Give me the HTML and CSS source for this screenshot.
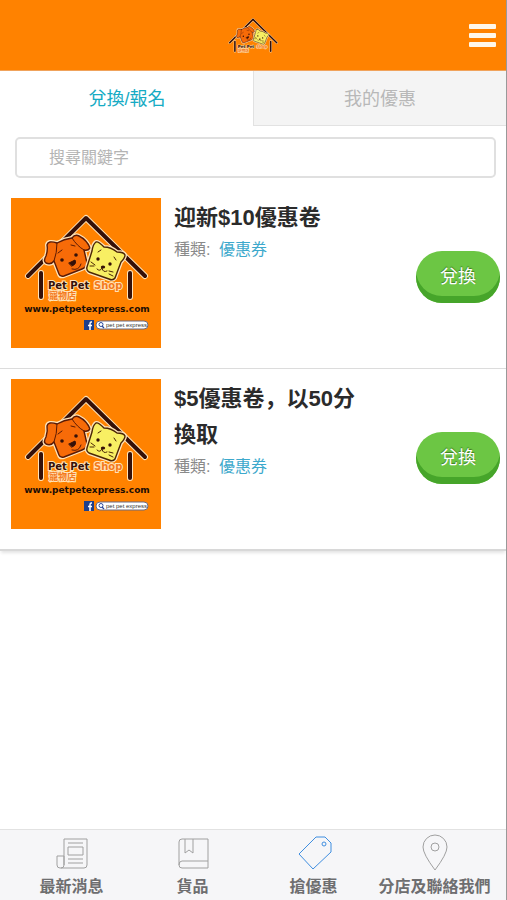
FILE: index.html
```
<!DOCTYPE html>
<html lang="zh-Hant">

<head>
  <meta charset="UTF-8" />
  <meta name="viewport" content="width=device-width, initial-scale=1.0" />
  <title>Pet Pet Shop</title>
  <link rel="stylesheet" href="styles.css">
</head>

<body>

  <!-- house, dog and cat shared by all logos -->
  <svg class="sprite" aria-hidden="true">
    <symbol id="pets" viewBox="0 0 150 150">
      <g fill="none" stroke-linecap="round" stroke-linejoin="round">
        <path d="M17 78 L75 20 L134 78 M30 75 V99 M119 75 V99" stroke="#ffe3b8" stroke-width="6" />
        <path d="M17 78 L75 20 L134 78 M30 75 V99 M119 75 V99" stroke="#351008" stroke-width="4" />
      </g>
      <g stroke-linejoin="round" stroke-linecap="round">
        <path d="M46 45 Q53 41 61 40 Q64 36 68 38 Q76 42 79 50 Q77 53 73 52 L76 65 Q76 69 71 71 L53 78 Q49 79 48 76 L43 63 Q40 67 35 65 Q32 63 35 58 Q37 52 36 47 Q37 42 46 45 Z" fill="#f76b08" stroke="#ffe3b8" stroke-width="4" />
        <path d="M46 45 Q53 41 61 40 Q64 36 68 38 Q76 42 79 50 Q77 53 73 52 L76 65 Q76 69 71 71 L53 78 Q49 79 48 76 L43 63 Q40 67 35 65 Q32 63 35 58 Q37 52 36 47 Q37 42 46 45 Z" fill="#f76b08" stroke="#5a1a05" stroke-width="1.4" />
        <path d="M46 45 Q46 55 43 63 M61 40 Q66 48 73 52 M47 55 l4 -3 M60 47 l4 1 M61 71 Q68 73 70 66" fill="none" stroke="#5a1a05" stroke-width="1" />
        <path d="M58 65 L64 62 Q66 66 61 68 Z" fill="#351008" stroke="#351008" stroke-width="1" />
        <circle cx="51" cy="62" r="1.8" fill="#351008" />
        <circle cx="65" cy="57" r="1.8" fill="#351008" />
        <path d="M85 44 Q87 43 93 49 Q100 49 106 54 Q113 54 114 57 Q114 60 110 64 L104 80 Q102 83 98 81 L78 74 Q75 72 76 69 L81 53 Q82 46 85 44 Z" fill="#f8ef63" stroke="#ffe3b8" stroke-width="4" />
        <path d="M85 44 Q87 43 93 49 Q100 49 106 54 Q113 54 114 57 Q114 60 110 64 L104 80 Q102 83 98 81 L78 74 Q75 72 76 69 L81 53 Q82 46 85 44 Z" fill="#f8ef63" stroke="#4a2505" stroke-width="1.4" />
        <path d="M87 54 l3 -2 M103 59 l2 3 M80 64 l4 3 M79 68 h4 M98 73 l4 1 M98 76 l4 2 M86 71 Q89 74 91 70 Q92 75 96 73" fill="none" stroke="#4a2505" stroke-width="1" />
        <circle cx="87" cy="61" r="1.7" fill="#351008" />
        <circle cx="99" cy="66" r="1.7" fill="#351008" />
        <ellipse cx="92" cy="69" rx="2.2" ry="1.5" fill="#351008" />
      </g>
    </symbol>
  </svg>

  <header class="header">
    <svg class="header-logo" viewBox="13 14 124 92" role="img" aria-label="Pet Pet Shop">
      <use href="#pets" width="150" height="150" />
      <text class="logo-name" x="37" y="91">Pet Pet</text>
      <text class="logo-shop" x="83" y="91">Shop</text>
      <text class="logo-zh" x="38" y="101">寵物店</text>
    </svg>
    <button class="menu-btn" type="button" aria-label="選單">
      <span></span><span></span><span></span>
    </button>
  </header>

  <nav class="tabs">
    <a class="tab active" href="#redeem">兌換/報名</a>
    <a class="tab" href="#mine">我的優惠</a>
  </nav>

  <form class="search">
    <input id="keyword" type="search" placeholder="搜尋關鍵字" aria-label="搜尋關鍵字" />
  </form>

  <main class="list">
    <article class="item">
      <svg class="thumb" viewBox="0 0 150 150" role="img" aria-label="Pet Pet Shop">
        <use href="#pets" width="150" height="150" />
        <text class="logo-name" x="37" y="91">Pet Pet</text>
        <text class="logo-shop" x="83" y="91">Shop</text>
        <text class="logo-zh" x="38" y="101">寵物店</text>
        <text class="logo-url" x="76" y="114">www.petpetexpress.com</text>
        <rect x="73" y="122" width="10" height="10" fill="#1d3f8c" />
        <path d="M81 124 H80 Q79 124 79 126 V132 M77 127.500 H81" fill="none" stroke="#fff" stroke-width="1.500" />
        <rect x="85" y="123" width="52" height="8" rx="4" fill="#fff" stroke="#6d6a80" stroke-width="1" />
        <path d="M91 128 L93 130" stroke="#2b4a9b" stroke-width="1.200" />
        <circle cx="90" cy="126.500" r="2" fill="none" stroke="#2b4a9b" />
        <text class="logo-fb" x="95" y="129">pet pet express</text>
      </svg>
      <div class="info">
        <h2 lang="zh-CN">迎新$10優惠卷</h2>
        <p>種類: <a href="#coupon">優惠券</a></p>
      </div>
      <button class="redeem" type="button">兌換</button>
    </article>

    <article class="item">
      <svg class="thumb" viewBox="0 0 150 150" role="img" aria-label="Pet Pet Shop">
        <use href="#pets" width="150" height="150" />
        <text class="logo-name" x="37" y="91">Pet Pet</text>
        <text class="logo-shop" x="83" y="91">Shop</text>
        <text class="logo-zh" x="38" y="101">寵物店</text>
        <text class="logo-url" x="76" y="114">www.petpetexpress.com</text>
        <rect x="73" y="122" width="10" height="10" fill="#1d3f8c" />
        <path d="M81 124 H80 Q79 124 79 126 V132 M77 127.500 H81" fill="none" stroke="#fff" stroke-width="1.500" />
        <rect x="85" y="123" width="52" height="8" rx="4" fill="#fff" stroke="#6d6a80" stroke-width="1" />
        <path d="M91 128 L93 130" stroke="#2b4a9b" stroke-width="1.200" />
        <circle cx="90" cy="126.500" r="2" fill="none" stroke="#2b4a9b" />
        <text class="logo-fb" x="95" y="129">pet pet express</text>
      </svg>
      <div class="info">
        <h2 lang="zh-CN">$5優惠卷，以50分換取</h2>
        <p>種類: <a href="#coupon">優惠券</a></p>
      </div>
      <button class="redeem" type="button">兌換</button>
    </article>
  </main>

  <nav class="bottom-nav">
    <a href="#news">
      <svg viewBox="0 0 36 38">
        <path d="M10 31 V5 H33 V31 Q33 34 30 34 H6 Q3 34 3 31 V22 H10 V31 Q10 34 7 34" />
        <path d="M14 9 H29 M14 13 H29 V21 H14 Z M14 25 H29 M14 29 H29" />
      </svg>
      <span>最新消息</span>
    </a>
    <a href="#goods">
      <svg viewBox="0 0 36 38">
        <path d="M33 27 V5 H7 Q4 5 4 8 V31 Q4 34 7 34 H33 V27 H7 Q4 27 4 31" />
        <path d="M10 5 V19 L14 16 L18 19 V5" />
      </svg>
      <span>貨品</span>
    </a>
    <a class="active" href="#offers">
      <svg viewBox="0 0 36 38">
        <path d="M3 20 L20 3 H29 L35 9 V18 L17 35 Z" />
        <circle cx="28" cy="10" r="2" />
      </svg>
      <span>搶優惠</span>
    </a>
    <a href="#contact">
      <svg viewBox="0 0 36 38">
        <path d="M18 36 Q6 20 6 13 A12 12 0 0 1 30 13 Q30 20 18 36 Z" />
        <circle cx="18" cy="13" r="4" />
      </svg>
      <span>分店及聯絡我們</span>
    </a>
  </nav>

</body>

</html>
```

FILE: styles.css
```
* {
  box-sizing: border-box;
}
body {
  margin: 0;
  min-height: 100vh;
  display: flex;
  flex-direction: column;
  background: #fff;
  border-right: 1px solid #999;
  font-family: "Liberation Sans", "Noto Sans CJK TC", sans-serif;
  font-size: 16px;
  color: #2b2b2b;
}
a {
  text-decoration: none;
}
.sprite {
  display: none;
}

.header {
  display: grid;
  grid-template-columns: 1fr auto 1fr;
  align-items: center;
  height: 71px;
  padding: 0 10px;
  background: #ff8200;
  border-bottom: 1px solid #f0a35c;
}
.header-logo {
  grid-column: 2;
  width: 50px;
  height: 37px;
}
.menu-btn {
  justify-self: end;
  display: flex;
  flex-direction: column;
  gap: 4px;
  padding: 0;
  border: 0;
  background: none;
}
.menu-btn span {
  width: 27px;
  height: 5px;
  border-radius: 1px;
  background: #fff7ea;
}

.logo-name,
.logo-shop {
  font-family: "DejaVu Sans", sans-serif;
  font-size: 10px;
  font-weight: bold;
  fill: #351008;
  stroke: #ffe3b8;
  stroke-width: 2px;
  paint-order: stroke;
}
.logo-shop {
  fill: #f47a1c;
}
.logo-zh {
  font-size: 9px;
  font-weight: bold;
  fill: #f47a1c;
  stroke: #ffe3b8;
  stroke-width: 2px;
  paint-order: stroke;
}
.logo-url {
  font-family: "DejaVu Sans", sans-serif;
  font-size: 9px;
  font-weight: bold;
  text-anchor: middle;
  fill: #1c0d05;
}
.logo-fb {
  font-size: 6px;
  fill: #333;
}

.tabs {
  display: flex;
}
.tab {
  flex: 1;
  height: 55px;
  line-height: 57px;
  text-align: center;
  font-size: 18px;
  color: #b8b8b8;
  background: #f4f4f4;
  border-left: 1px solid #e2e2e2;
  border-bottom: 1px solid #e2e2e2;
}
.tab.active {
  color: #16abc4;
  background: #fff;
  border-color: #fff;
}

.search {
  padding: 11px 10px 10px 15px;
}
.search input {
  display: block;
  width: 100%;
  height: 41px;
  padding: 0 32px;
  border: 2px solid #e0e0e0;
  border-radius: 5px;
  background: #fff;
  font: inherit;
  appearance: none;
}
.search input::placeholder {
  color: #b4b4b4;
}

.list {
  border-bottom: 2px solid #d8d8d8;
  box-shadow: 0 3px 3px -1px #e4e4e4;
}
.item {
  display: flex;
  gap: 13px;
  padding: 10px 6px 20px 11px;
}
.item + .item {
  border-top: 1px solid #dcdcdc;
}
.thumb {
  flex: none;
  width: 150px;
  height: 150px;
  background: #ff8200;
}
.info {
  flex: 1;
  padding-top: 2px;
}
.info h2 {
  max-width: 190px;
  margin: 0;
  font-family: "Liberation Sans", "Noto Sans CJK SC", sans-serif;
  font-size: 22px;
  line-height: 36px;
}
.info p {
  margin: 0;
  line-height: 28px;
  color: #8a8a8a;
}
.info a {
  margin-left: 4px;
  color: #3da9cc;
}
.redeem {
  align-self: center;
  width: 84px;
  height: 52px;
  margin-top: 8px;
  padding: 0 0 4px;
  border: 0;
  border-radius: 26px;
  background: #6cc644;
  box-shadow: inset 0 -7px #46a52a;
  font-family: inherit;
  font-size: 18px;
  color: #fff;
  text-shadow: 0 -1px 1px #3c7a25;
}

.bottom-nav {
  display: flex;
  margin-top: auto;
  padding: 4px 11px 3px;
  background: #f6f6f8;
  border-top: 1px solid #e2e2e2;
}
.bottom-nav a {
  flex: 1 1 0;
  min-width: 0;
  display: flex;
  flex-direction: column;
  align-items: center;
  gap: 5px;
  line-height: 20px;
  font-weight: bold;
  color: #6e6e70;
  white-space: nowrap;
}
.bottom-nav svg {
  width: 36px;
  height: 38px;
  fill: none;
  stroke: #a0a0a0;
  stroke-width: 1px;
}
.bottom-nav .active svg {
  stroke: #3f8ee0;
}
```
